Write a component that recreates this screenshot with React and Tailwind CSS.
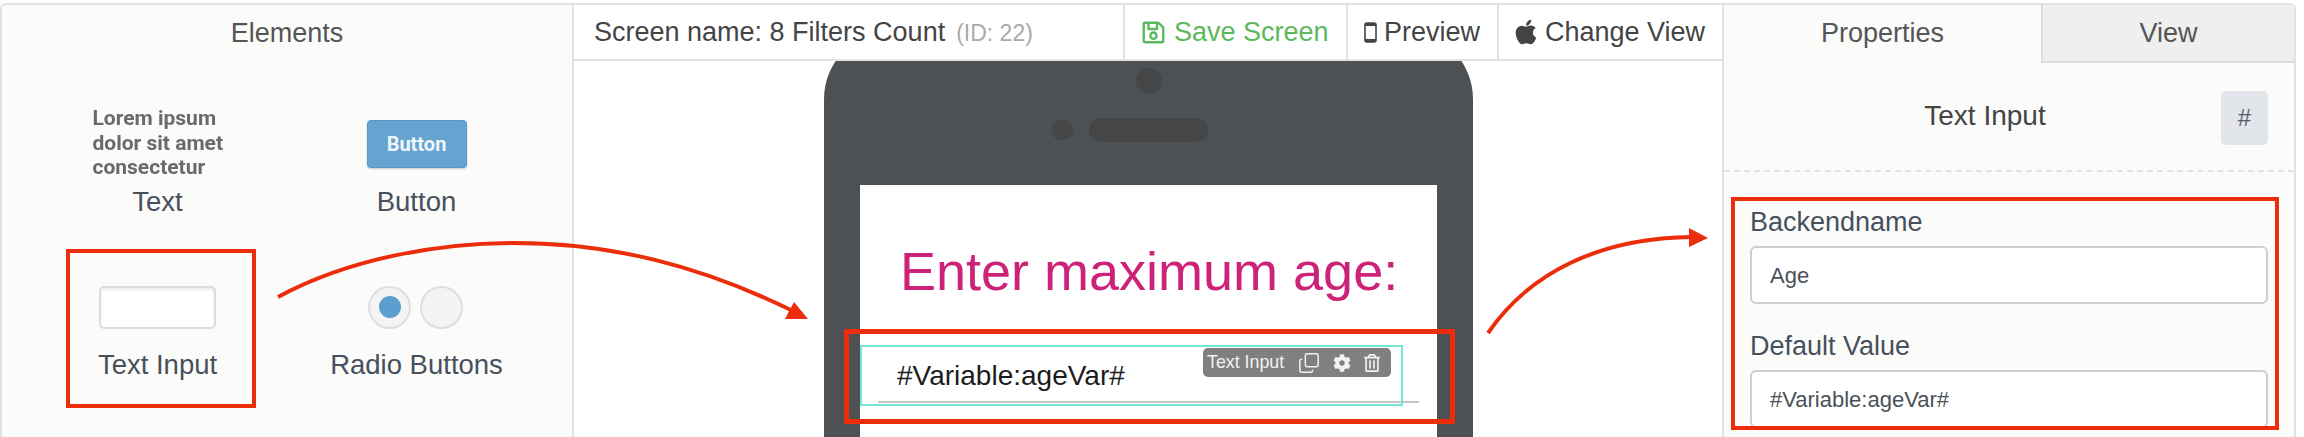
import React from "react";
import { FaApple, FaCog, FaRegSave, FaRegTrashAlt } from "react-icons/fa";
import { Copy } from "lucide-react";

const font = "font-['Liberation_Sans',Arial,sans-serif]";

function Item({ label, children }) {
  return (
    <div className="flex flex-col items-center h-[116px]">
      <div className="h-[75px] flex items-center justify-center">{children}</div>
      <div className="h-[42px] leading-[42px] text-[27.5px] text-[#47505c]">{label}</div>
    </div>
  );
}

function PhoneIcon() {
  return (
    <svg width="13" height="21" viewBox="0 0 13 21" className="shrink-0">
      <rect x="1" y="1" width="11" height="19" rx="2" fill="none" stroke="#444" strokeWidth="1.6" />
      <rect x="1" y="1" width="11" height="3" fill="#444" />
      <rect x="1" y="17" width="11" height="3" fill="#444" />
    </svg>
  );
}

function Elements() {
  return (
    <aside className="w-[574px] shrink-0 h-full bg-[#fbfbfa] border-l-2 border-t-2 border-r-2 border-[#e2e2e0] rounded-tl-[6px]">
      <div className="h-[58px] leading-[56px] text-center text-[27px] text-[#555]">Elements</div>
      <div className="grid grid-cols-2 gap-y-[47px] pl-[26px] pr-[26px] pt-[44px]">
        <Item label="Text">
          <div className="w-[130px] -mt-[2px] font-['Roboto',sans-serif] font-bold text-[21px] leading-[24.5px] text-[#6a6a6a] blur-[0.6px] whitespace-nowrap">
            Lorem ipsum<br />dolor sit amet<br />consectetur
          </div>
        </Item>
        <Item label="Button">
          <div className="w-[100px] h-[48px] rounded-[4px] bg-[#65a3d1] border border-[#5a97c6] flex items-center justify-center font-['Roboto',sans-serif] font-bold text-[20px] text-[#eef6fb] shadow-[0_1px_2px_rgba(0,0,0,0.2)]">
            Button
          </div>
        </Item>
        <Item label="Text Input">
          <div className="w-[117px] h-[43px] -ml-[1px] rounded-[5px] bg-white border-2 border-[#dcdcdc] shadow-[inset_0_2px_3px_rgba(0,0,0,0.08)]" />
        </Item>
        <Item label="Radio Buttons">
          <div className="flex gap-[9px] -ml-[2px]">
            <div className="w-[43px] h-[43px] rounded-full bg-[#f4f4f4] border-2 border-[#dedede] flex items-center justify-center">
              <div className="w-[22px] h-[22px] rounded-full bg-[#5b9fd0]" />
            </div>
            <div className="w-[43px] h-[43px] rounded-full bg-[#f4f4f4] border-2 border-[#dedede]" />
          </div>
        </Item>
      </div>
    </aside>
  );
}

function Canvas() {
  return (
    <main className="flex-1 min-w-0 h-full flex flex-col bg-white">
      <header className="h-[58px] shrink-0 flex border-t-2 border-b-2 border-[#e2e2e0] text-[27px] text-[#444]">
        <div className="w-[549px] shrink-0 flex items-center pl-[20px] whitespace-nowrap">
          Screen name: 8 Filters Count
          <span className="ml-[11px] text-[#aaa] text-[23px] mt-[2px]">(ID: 22)</span>
        </div>
        <div className="w-[223px] shrink-0 flex items-center gap-[8px] pl-[16px] border-l-2 border-[#e2e2e0] text-[#5cb85c] whitespace-nowrap">
          <FaRegSave className="w-[25px] h-[25px] shrink-0" />
          Save Screen
        </div>
        <div className="w-[151px] shrink-0 flex items-center gap-[7px] pl-[16px] border-l-2 border-[#e2e2e0] whitespace-nowrap">
          <PhoneIcon />
          Preview
        </div>
        <div className="flex-1 flex items-center gap-[5px] pl-[13px] border-l-2 border-[#e2e2e0] whitespace-nowrap">
          <FaApple className="w-[28px] h-[28px] shrink-0" />
          Change View
        </div>
      </header>
      <div className="flex-1 min-h-0 overflow-hidden">
        <div className="w-[649px] h-[600px] -mt-[30px] ml-[250px] bg-[#4d5154] rounded-t-[68px] flex flex-col items-center pt-[37px]">
          <div className="w-[26px] h-[26px] rounded-full bg-[#454648]" />
          <div className="mt-[24px] flex items-center gap-[16px] h-[24px] -ml-[39px]">
            <div className="w-[22px] h-[20px] rounded-full bg-[#454648]" />
            <div className="w-[119px] h-[24px] rounded-full bg-[#454648]" />
          </div>
          <div className="mt-[43px] w-[577px] flex-1 bg-white">
            <div className="pt-[56px] pl-[40px] text-[54px] leading-[60px] text-[#cc2277] whitespace-nowrap">
              Enter maximum age:
            </div>
            <div className="relative mt-[44px] h-[61px]">
              <div className="mx-[18px] h-[58px] border-b-2 border-[#c4c4c4] pl-[19px] pt-[11px] text-[28px] leading-[40px] text-[#1c1c1c]">
                #Variable:ageVar#
              </div>
              <div className="absolute inset-y-0 left-0 right-[34px] border-2 border-[#74e6d8]" />
              <div className="absolute top-[3px] right-[46px] w-[188px] h-[29px] rounded-[5px] bg-[#808080] text-[#f2f2f2] text-[17.8px] flex items-center pl-[4px]">
                <span>Text Input</span>
                <Copy className="ml-[14px] w-[22px] h-[22px] -scale-x-100 rotate-180" strokeWidth={1.6} />
                <FaCog className="ml-[13px] w-[18px] h-[18px]" />
                <FaRegTrashAlt className="ml-[13px] w-[16px] h-[18px]" />
              </div>
            </div>
          </div>
        </div>
      </div>
    </main>
  );
}

function Field({ label, value, className }) {
  return (
    <div className={className}>
      <div className="h-[40px] leading-[40px] text-[27px] text-[#47505c]">{label}</div>
      <div className="mt-[4px] h-[58px] bg-white border-2 border-[#cfcfcf] rounded-[6px] flex items-center pl-[18px] text-[22px] text-[#4a5158]">
        {value}
      </div>
    </div>
  );
}

function Properties() {
  return (
    <aside className="w-[574px] shrink-0 h-full bg-[#fbfbfa] border-l-2 border-r-2 border-t-2 border-[#e2e2e0] rounded-tr-[6px]">
      <div className="h-[58px] flex text-[27px] text-[#555]">
        <div className="w-[317px] leading-[56px] text-center">Properties</div>
        <div className="flex-1 leading-[56px] text-center bg-[#efefef] border-l-2 border-b-2 border-[#dcdcdc]">View</div>
      </div>
      <div className="h-[109px] border-b-2 border-dashed border-[#e2e2e0] flex items-center relative pb-[2px]">
        <div className="w-full text-center text-[28px] text-[#444] pr-[48px]">Text Input</div>
        <div className="absolute right-[26px] top-[28px] w-[47px] h-[54px] rounded-[5px] bg-[#e2e6ea] flex items-center justify-center text-[24px] text-[#56606a]">#</div>
      </div>
      <Field className="ml-[26px] mr-[26px] mt-[30px]" label="Backendname" value="Age" />
      <Field className="ml-[26px] mr-[26px] mt-[22px]" label="Default Value" value="#Variable:ageVar#" />
    </aside>
  );
}

function Annotations() {
  const red = "#ec2d0b";
  return (
    <div className="absolute inset-0 pointer-events-none">
      <div className="absolute left-[66px] top-[249px] w-[190px] h-[159px] border-[4px] border-[#ec2d0b]" />
      <div className="absolute left-[844px] top-[329px] w-[611px] h-[95px] border-[5px] border-[#ec2d0b]" />
      <div className="absolute left-[1731px] top-[197px] w-[548px] h-[233px] border-[4px] border-[#ec2d0b]" />
      <svg width="2304" height="437" className="absolute inset-0">
        <path d="M278 297 C 350 258 440 243 514 243 C 610 243 700 265 795 312" fill="none" stroke={red} strokeWidth="4" />
        <polygon points="794,302 785,319 808,319" fill={red} />
        <path d="M1488 333 C 1530 272 1600 238 1692 237" fill="none" stroke={red} strokeWidth="4" />
        <polygon points="1689,228 1689,247 1708,238" fill={red} />
      </svg>
    </div>
  );
}

export default function App() {
  return (
    <div className={`${font} relative w-[2304px] h-[437px] overflow-hidden bg-white pt-[3px] pr-[8px] flex`}>
      <Elements />
      <Canvas />
      <Properties />
      <Annotations />
    </div>
  );
}
